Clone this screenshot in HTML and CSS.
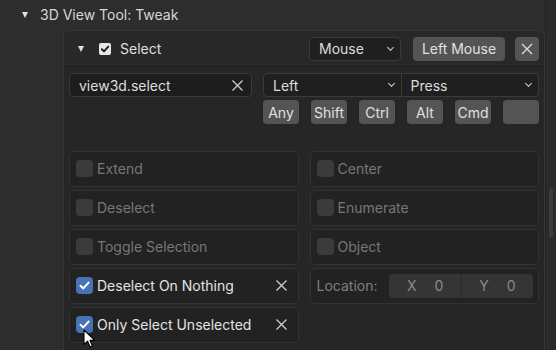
FILE: index.html
```html
<!DOCTYPE html>
<html lang="en">
<head>
  <meta charset="UTF-8" />
  <title>Keymap - 3D View Tool: Tweak</title>
  <link rel="stylesheet" href="styles.css">
</head>
<body>
  <div class="editor">
    <div class="content">
      <!-- keymap title -->
      <div class="keymap-title">
        <span class="tri"></span>
        <span>3D View Tool: Tweak</span>
      </div>

      <div class="panel">
        <!-- item header -->
        <div class="panel-head">
          <span class="tri small"></span>
          <span class="head-check">
            <svg width="10" height="10" viewBox="0 0 10 10"><path d="M1.8 5.2 L4 7.3 L8.3 2.6" fill="none" stroke="#1b1b1b" stroke-width="1.9" stroke-linecap="round" stroke-linejoin="round"/></svg>
          </span>
          <span class="head-name">Select</span>
          <div class="head-tools">
            <div class="dropdown mouse-type">Mouse <span class="chev"></span></div>
            <button class="btn key-btn">Left Mouse</button>
            <button class="btn close-btn">
              <svg width="12" height="12" viewBox="0 0 12 12"><path d="M1 1 L11 11 M11 1 L1 11" stroke="#dcdcdc" stroke-width="1.4"/></svg>
            </button>
          </div>
        </div>

        <div class="panel-body">
          <div class="op-row">
            <div class="text-field">
              <span>view3d.select</span>
              <svg width="11" height="11" viewBox="0 0 11 11"><path d="M0.5 0.5 L10.5 10.5 M10.5 0.5 L0.5 10.5" stroke="#cfcfcf" stroke-width="1.3"/></svg>
            </div>
            <div class="dropdown-pair">
              <div class="dropdown">Left <span class="chev"></span></div>
              <div class="dropdown">Press <span class="chev"></span></div>
            </div>
          </div>

          <div class="mods">
            <button class="btn mod">Any</button>
            <button class="btn mod">Shift</button>
            <button class="btn mod">Ctrl</button>
            <button class="btn mod">Alt</button>
            <button class="btn mod">Cmd</button>
            <button class="btn mod"></button>
          </div>

          <!-- operator properties -->
          <div class="props">
            <div class="prop off"><span class="cb"></span>Extend</div>
            <div class="prop off"><span class="cb"></span>Center</div>
            <div class="prop off"><span class="cb"></span>Deselect</div>
            <div class="prop off"><span class="cb"></span>Enumerate</div>
            <div class="prop off"><span class="cb"></span>Toggle Selection</div>
            <div class="prop off"><span class="cb"></span>Object</div>
            <div class="prop on">
              <span class="cb checked"><svg width="13" height="13" viewBox="0 0 13 13"><path d="M2.5 6.8 L5.3 9.4 L10.6 3.6" fill="none" stroke="#fff" stroke-width="2" stroke-linecap="round" stroke-linejoin="round"/></svg></span>
              <span class="label">Deselect On Nothing</span>
              <svg class="reset" width="11" height="11" viewBox="0 0 11 11"><path d="M0.5 0.5 L10.5 10.5 M10.5 0.5 L0.5 10.5" stroke="#cfcfcf" stroke-width="1.3"/></svg>
            </div>
            <div class="prop loc">
              <span class="loc-label">Location:</span>
              <div class="vec">
                <div class="vec-cell"><span>X</span><span>0</span></div>
                <div class="vec-cell"><span>Y</span><span>0</span></div>
              </div>
            </div>
            <div class="prop on">
              <span class="cb checked"><svg width="13" height="13" viewBox="0 0 13 13"><path d="M2.5 6.8 L5.3 9.4 L10.6 3.6" fill="none" stroke="#fff" stroke-width="2" stroke-linecap="round" stroke-linejoin="round"/></svg></span>
              <span class="label">Only Select Unselected</span>
              <svg class="reset" width="11" height="11" viewBox="0 0 11 11"><path d="M0.5 0.5 L10.5 10.5 M10.5 0.5 L0.5 10.5" stroke="#cfcfcf" stroke-width="1.3"/></svg>
            </div>
          </div>
        </div>
      </div>
    </div>

    <!-- scrollbar -->
    <div class="scrollbar"><div class="thumb"></div></div>
  </div>

  <!-- mouse cursor -->
  <svg class="cursor" width="14" height="20" viewBox="0 0 14 20">
    <path d="M1 1 L1 15.5 L4.6 12.2 L7.2 18 L9.4 17 L6.9 11.4 L11.8 11.4 Z" fill="#fff" stroke="#000" stroke-width="1.1" stroke-linejoin="round"/>
  </svg>
</body>
</html>
```

FILE: styles.css
```css
/* base */
body {
  margin: 0;
  background: #2d2d2d;
  font-family: Inter, "Noto Sans", sans-serif;
  font-size: 14px;
  color: #dedede;
  overflow: hidden;
}

.editor {
  display: flex;
  height: 350px;
}
.content {
  flex: 1;
}

/* keymap title */
.keymap-title {
  height: 30px;
  display: flex;
  align-items: center;
  gap: 12px;
  padding-left: 22px;
  padding-bottom: 1px;
  box-sizing: border-box;
  color: #d6d6d6;
}
.tri {
  width: 0;
  height: 0;
  border-left: 3.5px solid transparent;
  border-right: 3.5px solid transparent;
  border-top: 6px solid #e0e0e0;
}

/* panel */
.panel {
  margin-left: 63px;
  border: 1px solid #373737;
  border-bottom: none;
  border-radius: 6px 6px 0 0;
  background: #262626;
  height: 330px;
  box-sizing: border-box;
}
.panel-head {
  height: 35px;
  display: flex;
  align-items: center;
  padding-left: 14px;
  padding-right: 5px;
  border-bottom: 1px solid #1c1c1c;
  background: #282828;
  border-radius: 6px 6px 0 0;
}
.tri.small {
  margin-right: 15px;
}
.head-check {
  width: 12px;
  height: 12px;
  background: #e6e6e6;
  border-radius: 2px;
  display: flex;
  align-items: center;
  justify-content: center;
  margin-right: 9px;
}
.head-name {
  flex: 1;
}
.head-tools {
  display: flex;
  align-items: center;
}

/* widgets */
.dropdown {
  height: 24px;
  box-sizing: border-box;
  border: 1px solid #3a3a3a;
  border-radius: 4px;
  background: #1f1f1f;
  display: flex;
  align-items: center;
  justify-content: space-between;
  padding: 0 7px 0 9px;
  color: #dcdcdc;
}
.chev {
  width: 4px;
  height: 4px;
  border-right: 1.3px solid #cfcfcf;
  border-bottom: 1.3px solid #cfcfcf;
  transform: rotate(45deg);
  margin-top: -3px;
}
.mouse-type {
  width: 92px;
  margin-right: 12px;
}
.btn {
  font: inherit;
  height: 24px;
  border: none;
  border-radius: 4px;
  background: #545454;
  color: #e0e0e0;
  padding: 0;
  display: flex;
  align-items: center;
  justify-content: center;
}
.key-btn {
  width: 92px;
  margin-right: 10px;
}
.close-btn {
  width: 24px;
}

.panel-body {
  padding: 6px 5px 0 5px;
}
.op-row {
  display: flex;
  gap: 11px;
}
.text-field {
  width: 183px;
  height: 24px;
  box-sizing: border-box;
  border: 1px solid #3a3a3a;
  border-radius: 4px;
  background: #1d1d1d;
  display: flex;
  align-items: center;
  justify-content: space-between;
  padding: 0 8px 0 9px;
}
.dropdown-pair {
  flex: 1;
  display: flex;
}
.dropdown-pair .dropdown {
  flex: 1;
}
.dropdown-pair .dropdown:first-child {
  border-radius: 4px 0 0 4px;
}
.dropdown-pair .dropdown:last-child {
  border-radius: 0 4px 4px 0;
  border-left: none;
}

.mods {
  display: flex;
  gap: 12px;
  margin: 3px 0 0 194px;
}
.mod {
  width: 36px;
}

/* properties grid */
.props {
  display: grid;
  grid-template-columns: 1fr 1fr;
  column-gap: 11px;
  row-gap: 3px;
  margin-top: 27px;
}
.prop {
  height: 36px;
  box-sizing: border-box;
  border: 1px solid #333;
  border-radius: 5px;
  background: #222;
  display: flex;
  align-items: center;
  padding: 0 10px 1px 6px;
}
.cb {
  width: 17px;
  height: 17px;
  border-radius: 4px;
  background: #3b3b3b;
  margin-right: 4px;
  display: flex;
  align-items: center;
  justify-content: center;
  flex-shrink: 0;
}
.cb.checked {
  background: #4772b3;
}
.prop.off {
  color: #777;
}
.prop.on {
  color: #e4e4e4;
}
.label {
  flex: 1;
}
.reset {
  margin-right: 1px;
}

.loc {
  color: #7f7f7f;
  padding-left: 6px;
  padding-right: 5px;
  gap: 12px;
}
.vec {
  flex: 1;
  display: flex;
  height: 24px;
  border-radius: 4px;
  background: #353535;
  overflow: hidden;
}
.vec-cell {
  flex: 1;
  display: flex;
  justify-content: center;
  align-items: center;
  gap: 18px;
  color: #8a8a8a;
}
.vec-cell + .vec-cell {
  border-left: 1px solid #2a2a2a;
}

/* scrollbar strip */
.scrollbar {
  width: 11px;
  background: #2b2b2b;
  border-left: 1px solid #232323;
  position: relative;
}
.thumb {
  position: absolute;
  left: 3px;
  top: 188px;
  width: 4px;
  height: 50px;
  border-radius: 2px;
  background: #3c3c3c;
}

/* cursor overlay */
.cursor {
  position: absolute;
  left: 83px;
  top: 329px;
}
```
